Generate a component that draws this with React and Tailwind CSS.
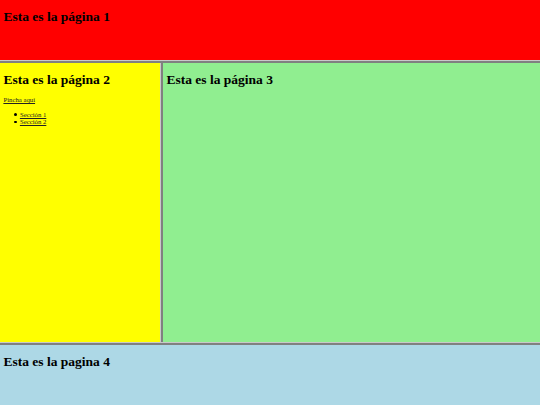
export default function App() {
  return (
    <div className="w-[540px] h-[405px] flex flex-col overflow-hidden font-['Liberation_Serif','Times_New_Roman',serif] text-black">
      {/* Frame 1 */}
      <div className="h-[60px] bg-[#ff0000] px-[3.4px] pt-[9px] overflow-hidden">
        <h1 className="text-[13.5px] leading-[15px] font-bold">Esta es la página 1</h1>
      </div>
      <div className="h-[3px] bg-[#808080] border-t border-[#c8c8c8]"></div>

      {/* Frames 2 and 3 */}
      <div className="flex-1 flex min-h-0">
        <div className="w-[160px] bg-[#ffff00] px-[3.4px] pt-[9px] overflow-hidden">
          <h1 className="text-[13.5px] leading-[15px] font-bold">Esta es la página 2</h1>
          <p className="mt-[9px] text-[6.75px] leading-[7.75px]">
            <a href="#" className="underline text-[#222]">Pincha aquí</a>
          </p>
          <ul className="mt-[6.75px] pl-[11px] text-[6.75px] leading-[7.75px]">
            <li className="flex items-center gap-[3px]">
              <span className="w-[2.5px] h-[2.5px] rounded-full bg-black"></span>
              <a href="#" className="underline text-[#222]">Sección 1</a>
            </li>
            <li className="flex items-center gap-[3px]">
              <span className="w-[2.5px] h-[2.5px] rounded-full bg-black"></span>
              <a href="#" className="underline text-[#222]">Sección 2</a>
            </li>
          </ul>
        </div>
        <div className="w-[3px] bg-[#808080] border-l border-[#c8c8c8]"></div>
        <div className="flex-1 bg-[#90ee90] px-[3.4px] pt-[9px] overflow-hidden">
          <h1 className="text-[13.5px] leading-[15px] font-bold">Esta es la página 3</h1>
        </div>
      </div>

      <div className="h-[3px] bg-[#808080] border-t border-[#c8c8c8]"></div>
      {/* Frame 4 */}
      <div className="h-[60px] bg-[#add8e6] px-[3.4px] pt-[9px] overflow-hidden">
        <h1 className="text-[13.5px] leading-[15px] font-bold">Esta es la pagina 4</h1>
      </div>
    </div>
  );
}
